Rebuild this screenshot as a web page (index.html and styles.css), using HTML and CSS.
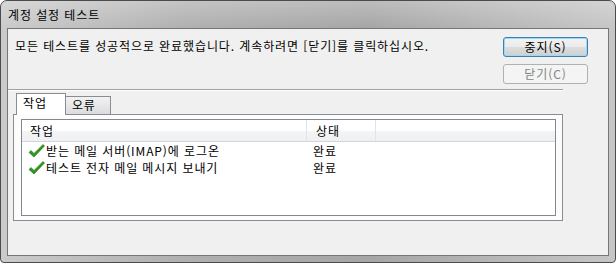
FILE: index.html
```html
<!DOCTYPE html>
<html lang="ko">
<head>
    <meta charset="UTF-8">
    <title>계정 설정 테스트</title>
    <link rel="stylesheet" href="styles.css">
</head>
<body>

    <div class="window">
        <div class="titlebar">계정 설정 테스트</div>

        <div class="client">
            <div class="top">
                <p class="message">모든 테스트를 성공적으로 완료했습니다. 계속하려면 [닫기]를 클릭하십시오.</p>
                <div class="buttons">
                    <button class="btn btn-default">중지(S)</button>
                    <button class="btn" disabled>닫기(C)</button>
                </div>
            </div>

            <div class="separator"></div>

            <div class="tabs">
                <div class="tab active">작업</div>
                <div class="tab">오류</div>
            </div>

            <div class="panel">
                <div class="list">
                    <div class="list-header">
                        <div class="col col-task">작업</div>
                        <div class="col col-status">상태</div>
                        <div class="col col-rest"></div>
                    </div>

                    <div class="row">
                        <div class="col col-task">
                            <svg class="check" width="17" height="16" viewBox="0 0 17 16">
                                <path d="M1 9.5 L3 7.5 L6 10.5 L15 1.5 L16.5 3 L6 14 Z" fill="#2f9a1c" stroke="#1e6e10" stroke-width="0.6" stroke-linejoin="round"/>
                            </svg>
                            받는 메일 서버(IMAP)에 로그온
                        </div>
                        <div class="col col-status">완료</div>
                    </div>

                    <div class="row">
                        <div class="col col-task">
                            <svg class="check" width="17" height="16" viewBox="0 0 17 16">
                                <path d="M1 9.5 L3 7.5 L6 10.5 L15 1.5 L16.5 3 L6 14 Z" fill="#2f9a1c" stroke="#1e6e10" stroke-width="0.6" stroke-linejoin="round"/>
                            </svg>
                            테스트 전자 메일 메시지 보내기
                        </div>
                        <div class="col col-status">완료</div>
                    </div>
                </div>
            </div>
        </div>
    </div>

</body>
</html>
```

FILE: styles.css
```css
/* General Styles */
body {
    margin: 0;
    background: #ffffff;
    font-family: "Noto Sans CJK KR", "Noto Sans", sans-serif;
    font-size: 12px;
    letter-spacing: 0.9px;
    color: #000;
}

/* Window frame */
.window {
    width: 616px;
    height: 263px;
    box-sizing: border-box;
    border: 1px solid #4b4b4b;
    border-radius: 7px 7px 4px 4px;
    background: linear-gradient(to right, #cbcbcb 0%, #b0b0b0 30%, #a6a6a6 60%, #c6c6c6 100%);
    display: flex;
    flex-direction: column;
    overflow: hidden;
}

.titlebar {
    height: 27px;
    padding-left: 7px;
    display: flex;
    align-items: center;
    line-height: 16px;
    background: linear-gradient(to bottom, rgba(255, 255, 255, 0.25), rgba(255, 255, 255, 0));
}

.client {
    flex: 1;
    margin: 0 6px 6px;
    border: 1px solid #767676;
    background: #f0f0f0;
    display: flex;
    flex-direction: column;
}

/* Message and buttons */
.top {
    display: flex;
    justify-content: space-between;
    padding: 8px 20px 0 7px;
}

.message {
    margin: 1px 0 0;
    line-height: 16px;
}

.buttons {
    display: flex;
    flex-direction: column;
    gap: 7px;
}

.btn {
    width: 85px;
    height: 20px;
    padding: 0;
    font-family: inherit;
    font-size: 12px;
    letter-spacing: inherit;
    line-height: 16px;
    color: #000;
    border: 1px solid #707070;
    border-radius: 3px;
    background: linear-gradient(to bottom, #f2f2f2 0%, #ebebeb 50%, #dddddd 51%, #cfcfcf 100%);
}

.btn-default {
    border-color: #3c7fb1;
    box-shadow: inset 0 0 0 1px #9ed8f4;
}

.btn:disabled {
    color: #838383;
    border-color: #adb2b5;
    background: #f4f4f4;
}

.separator {
    margin: 5px 45px 0 0;
    height: 1px;
    background: #a0a0a0;
    border-bottom: 1px solid #ffffff;
}

/* Tabs */
.tabs {
    display: flex;
    align-items: flex-end;
    margin: 2px 0 0 8px;
    height: 21px;
    position: relative;
    z-index: 1;
}

.tab {
    height: 17px;
    padding: 0 14px 0 6px;
    border: 1px solid #898c95;
    border-bottom: none;
    background: linear-gradient(to bottom, #f2f2f2, #dcdcdc);
    line-height: 16px;
}

.tab.active {
    height: 21px;
    margin-bottom: -1px;
    padding: 0 18px 0 6px;
    background: #ffffff;
    line-height: 18px;
}

.tab + .tab {
    border-left: none;
    padding-left: 6px;
}

/* Panel and list view */
.panel {
    margin: 0 45px 0 5px;
    height: 97px;
    border: 1px solid #898c95;
    background: #fcfcfc;
    padding: 4px 6px 4px 7px;
}

.list {
    height: 95px;
    border: 1px solid #828790;
    background: #ffffff;
}

.list-header {
    display: flex;
    height: 21px;
    border-bottom: 1px solid #d5d5d5;
    background: linear-gradient(to bottom, #ffffff 0%, #ffffff 50%, #f3f4f6 51%, #eef0f3 100%);
}

.list-header .col {
    border-right: 1px solid #e2e3e5;
    line-height: 21px;
}

.list-header .col-rest {
    flex: 1;
    border-right: none;
}

.col-task {
    width: 276px;
    padding-left: 8px;
    display: flex;
    align-items: center;
}

.col-status {
    width: 59px;
    padding-left: 9px;
}

.row {
    display: flex;
    height: 17px;
    line-height: 17px;
}

.row .col-task {
    padding-left: 6px;
}

.check {
    margin-right: 1px;
    flex-shrink: 0;
}
```
